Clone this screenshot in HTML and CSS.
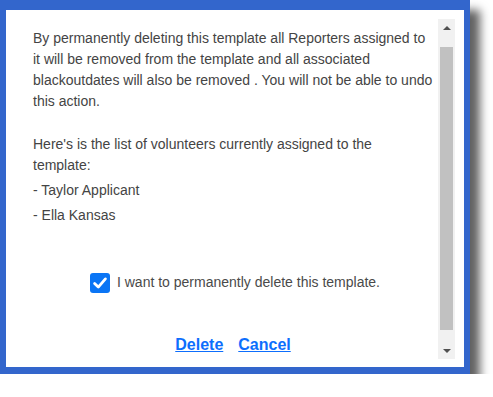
FILE: index.html
```html
<!DOCTYPE html>
<html>
<head>
<meta charset="utf-8">
<link rel="stylesheet" href="styles.css">
</head>
<body>
<div class="dialog">
  <div class="content">
    <p class="para">By permanently deleting this template all Reporters assigned to<br>it will be removed from the template and all associated<br>blackoutdates will also be removed . You will not be able to undo<br>this action.</p>
    <p class="para para-list">Here's is the list of volunteers currently assigned to the<br>template:</p>
    <div class="item">- Taylor Applicant</div>
    <div class="item">- Ella Kansas</div>
    <label class="confirm">
      <span class="checkbox">
        <svg width="20" height="20" viewBox="0 0 20 20"><path d="M4.6 10.4 L8.3 14.1 L15.4 5.9" fill="none" stroke="#fff" stroke-width="2.8" stroke-linecap="round" stroke-linejoin="round"/></svg>
      </span>
      <span class="confirm-text">I want to permanently delete this template.</span>
    </label>
    <div class="actions">
      <a href="#" class="action">Delete</a>
      <a href="#" class="action">Cancel</a>
    </div>
  </div>
  <div class="scrollbar">
    <div class="sb-btn"><span class="arrow-up"></span></div>
    <div class="sb-track"><div class="sb-thumb"></div></div>
    <div class="sb-btn"><span class="arrow-down"></span></div>
  </div>
</div>
</body>
</html>
```
FILE: styles.css
```css
html, body {
  margin: 0;
  padding: 0;
  background: #ffffff;
}

body {
  font-family: "Liberation Sans", Arial, sans-serif;
}

.dialog {
  box-sizing: content-box;
  width: 449px;
  height: 340px;
  padding: 9px 9px 8px 0;
  background: #ffffff;
  border-style: solid;
  border-color: #3366cc;
  border-width: 10px 6px 7px 6px;
  box-shadow: 10px 10px 9px rgba(0, 0, 0, 0.62);
  display: flex;
}

.content {
  flex: 1;
  padding: 9px 1px 0 27px;
  overflow: hidden;
  color: #444444;
  font-size: 14px;
  line-height: 21px;
  white-space: nowrap;
}

.para {
  margin: 0;
}

.para-list {
  margin-top: 22px;
}

.item {
  margin-top: 4px;
}

.confirm {
  display: flex;
  align-items: center;
  justify-content: center;
  gap: 7px;
  margin-top: 46px;
  color: #4a4a4a;
}

.checkbox {
  width: 20px;
  height: 20px;
  border-radius: 3px;
  background: #0a75f5;
  display: block;
}

.checkbox svg {
  display: block;
}

.actions {
  display: flex;
  justify-content: center;
  gap: 15px;
  margin-top: 43px;
  padding-right: 4px;
  line-height: 18px;
}

.action {
  color: #0d6efd;
  font-size: 16px;
  font-weight: bold;
  text-decoration: underline;
}

.scrollbar {
  width: 17px;
  display: flex;
  flex-direction: column;
  background: #f1f1f1;
}

.sb-btn {
  height: 17px;
  display: flex;
  align-items: center;
  justify-content: center;
}

.sb-track {
  flex: 1;
  padding: 11px 2px 12px 2px;
  display: flex;
}

.sb-thumb {
  flex: 1;
  background: #c1c1c1;
}

.arrow-up {
  width: 0;
  height: 0;
  border-left: 4px solid transparent;
  border-right: 4px solid transparent;
  border-bottom: 4px solid #505050;
}

.arrow-down {
  width: 0;
  height: 0;
  border-left: 4px solid transparent;
  border-right: 4px solid transparent;
  border-top: 4px solid #505050;
}
```
